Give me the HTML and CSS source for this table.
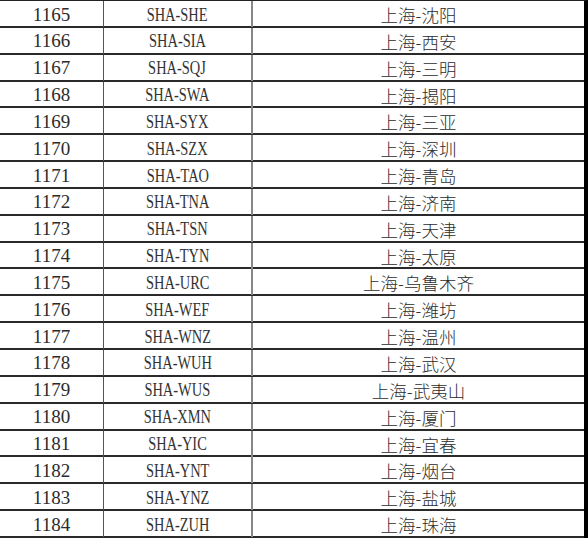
FILE: index.html
```html
<!DOCTYPE html>
<html lang="zh">
<head>
<meta charset="utf-8">
<link rel="stylesheet" href="styles.css">
</head>
<body>
<div class="table">
  <div class="row"><div class="c num">1165</div><div class="c code"><span>SHA-SHE</span></div><div class="c city">上海-沈阳</div></div>
  <div class="row"><div class="c num">1166</div><div class="c code"><span>SHA-SIA</span></div><div class="c city">上海-西安</div></div>
  <div class="row"><div class="c num">1167</div><div class="c code"><span>SHA-SQJ</span></div><div class="c city">上海-三明</div></div>
  <div class="row"><div class="c num">1168</div><div class="c code"><span>SHA-SWA</span></div><div class="c city">上海-揭阳</div></div>
  <div class="row"><div class="c num">1169</div><div class="c code"><span>SHA-SYX</span></div><div class="c city">上海-三亚</div></div>
  <div class="row"><div class="c num">1170</div><div class="c code"><span>SHA-SZX</span></div><div class="c city">上海-深圳</div></div>
  <div class="row"><div class="c num">1171</div><div class="c code"><span>SHA-TAO</span></div><div class="c city">上海-青岛</div></div>
  <div class="row"><div class="c num">1172</div><div class="c code"><span>SHA-TNA</span></div><div class="c city">上海-济南</div></div>
  <div class="row"><div class="c num">1173</div><div class="c code"><span>SHA-TSN</span></div><div class="c city">上海-天津</div></div>
  <div class="row"><div class="c num">1174</div><div class="c code"><span>SHA-TYN</span></div><div class="c city">上海-太原</div></div>
  <div class="row"><div class="c num">1175</div><div class="c code"><span>SHA-URC</span></div><div class="c city">上海-乌鲁木齐</div></div>
  <div class="row"><div class="c num">1176</div><div class="c code"><span>SHA-WEF</span></div><div class="c city">上海-潍坊</div></div>
  <div class="row"><div class="c num">1177</div><div class="c code"><span>SHA-WNZ</span></div><div class="c city">上海-温州</div></div>
  <div class="row"><div class="c num">1178</div><div class="c code"><span>SHA-WUH</span></div><div class="c city">上海-武汉</div></div>
  <div class="row"><div class="c num">1179</div><div class="c code"><span>SHA-WUS</span></div><div class="c city">上海-武夷山</div></div>
  <div class="row"><div class="c num">1180</div><div class="c code"><span>SHA-XMN</span></div><div class="c city">上海-厦门</div></div>
  <div class="row"><div class="c num">1181</div><div class="c code"><span>SHA-YIC</span></div><div class="c city">上海-宜春</div></div>
  <div class="row"><div class="c num">1182</div><div class="c code"><span>SHA-YNT</span></div><div class="c city">上海-烟台</div></div>
  <div class="row"><div class="c num">1183</div><div class="c code"><span>SHA-YNZ</span></div><div class="c city">上海-盐城</div></div>
  <div class="row"><div class="c num">1184</div><div class="c code"><span>SHA-ZUH</span></div><div class="c city">上海-珠海</div></div>
</div>
</body>
</html>
```

FILE: styles.css
```css
html, body {
  margin: 0;
  padding: 0;
  background: #fff;
}

.table {
  width: 588px;
  box-sizing: border-box;
  border-top: 1px solid #222;
  border-right: 4px solid #000;
  display: flex;
  flex-direction: column;
  color: #2b2b2b;
}

.row {
  display: grid;
  grid-template-columns: 104px 149px 1fr;
  height: 26.85px;
  box-sizing: border-box;
  border-bottom: 2px solid #2a2a2a;
}

.c {
  display: flex;
  align-items: center;
  justify-content: center;
  box-sizing: border-box;
  padding-top: 1px;
  white-space: nowrap;
}

.num {
  border-right: 1px solid #555;
  font-family: "Liberation Serif", serif;
  font-size: 19px;
}

.code {
  border-right: 2px solid #888;
  font-family: "Liberation Serif", serif;
  font-size: 19px;
  color: #333;
}

.code span {
  display: inline-block;
  transform: scaleX(0.76);
}

.city {
  font-family: "Noto Sans CJK SC", sans-serif;
  font-size: 17.5px;
  font-weight: 300;
}
```
